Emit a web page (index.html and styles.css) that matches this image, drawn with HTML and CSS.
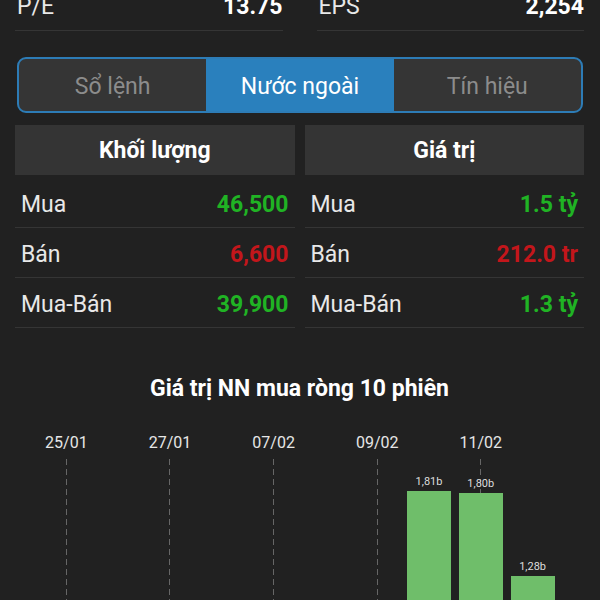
FILE: index.html
```html
<!DOCTYPE html>
<html lang="vi">
  <head>
    <meta charset="UTF-8" />
    <meta name="viewport" content="width=device-width, initial-scale=1.0" />
    <title>Nước ngoài</title>
    <link rel="stylesheet" href="styles.css">
  </head>

  <body>
    <div class="page">
      <!-- chỉ số cơ bản -->
      <div class="stats">
        <div class="stat">
          <span class="stat-label">P/E</span>
          <span class="stat-value">13.75</span>
        </div>
        <div class="stat">
          <span class="stat-label">EPS</span>
          <span class="stat-value">2,254</span>
        </div>
      </div>

      <div class="tabs">
        <span class="tab">Sổ lệnh</span>
        <span class="tab active">Nước ngoài</span>
        <span class="tab">Tín hiệu</span>
      </div>

      <div class="trade">
        <div class="trade-col">
          <div class="trade-head">Khối lượng</div>
          <div class="trade-row"><span>Mua</span><span class="up">46,500</span></div>
          <div class="trade-row"><span>Bán</span><span class="down">6,600</span></div>
          <div class="trade-row"><span>Mua-Bán</span><span class="up">39,900</span></div>
        </div>
        <div class="trade-col">
          <div class="trade-head">Giá trị</div>
          <div class="trade-row"><span>Mua</span><span class="up">1.5 tỷ</span></div>
          <div class="trade-row"><span>Bán</span><span class="down">212.0 tr</span></div>
          <div class="trade-row"><span>Mua-Bán</span><span class="up">1.3 tỷ</span></div>
        </div>
      </div>

      <div class="chart">
        <div class="chart-title">Giá trị NN mua ròng 10 phiên</div>
        <div class="plot">
          <div class="col tick">
            <div class="date">25/01</div>
            <div class="col-body"></div>
          </div>
          <div class="col">
            <div class="date"></div>
            <div class="col-body"></div>
          </div>
          <div class="col tick">
            <div class="date">27/01</div>
            <div class="col-body"></div>
          </div>
          <div class="col">
            <div class="date"></div>
            <div class="col-body"></div>
          </div>
          <div class="col tick">
            <div class="date">07/02</div>
            <div class="col-body"></div>
          </div>
          <div class="col">
            <div class="date"></div>
            <div class="col-body"></div>
          </div>
          <div class="col tick">
            <div class="date">09/02</div>
            <div class="col-body"></div>
          </div>
          <div class="col">
            <div class="date"></div>
            <div class="col-body">
              <span class="bar-value">1,81b</span>
              <div class="bar" style="height: 290px"></div>
            </div>
          </div>
          <div class="col tick">
            <div class="date">11/02</div>
            <div class="col-body">
              <span class="bar-value">1,80b</span>
              <div class="bar" style="height: 288px"></div>
            </div>
          </div>
          <div class="col">
            <div class="date"></div>
            <div class="col-body">
              <span class="bar-value">1,28b</span>
              <div class="bar" style="height: 205px"></div>
            </div>
          </div>
        </div>
      </div>
    </div>
  </body>
</html>
```

FILE: styles.css
```css
html,
body {
  margin: 0;
  padding: 0;
  height: 600px;
  overflow: hidden;
}

body {
  background-color: #212121;
  color: #e8e8e8;
  font-family: Roboto, "Noto Sans", sans-serif;
}

.page {
  padding: 0 16px 0 15px;
}

/* P/E, EPS */
.stats {
  display: grid;
  grid-template-columns: 1fr 1fr;
  column-gap: 34px;
  margin-top: -8px;
}

.stat {
  display: flex;
  justify-content: space-between;
  font-size: 23px;
  line-height: 30px;
  padding: 0 0 8px 2px;
  border-bottom: 1px solid #353535;
}

.stat-value {
  font-weight: 700;
  color: #ffffff;
}

/* tabs */
.tabs {
  display: grid;
  grid-template-columns: 1fr 1fr 1fr;
  margin: 26px 1px 0 2px;
  height: 56px;
  box-sizing: border-box;
  border: 2px solid #2d7cb6;
  border-radius: 9px;
  overflow: hidden;
  background-color: #353535;
}

.tab {
  display: flex;
  align-items: center;
  justify-content: center;
  padding-top: 2px;
  font-size: 23px;
  color: #8c8c8c;
}

.tab.active {
  background-color: #2a80bd;
  color: #ffffff;
}

/* khối lượng / giá trị */
.trade {
  display: grid;
  grid-template-columns: 1fr 1fr;
  column-gap: 10px;
  margin-top: 12px;
}

.trade-head {
  height: 50px;
  display: flex;
  align-items: center;
  justify-content: center;
  background-color: #343434;
  color: #ffffff;
  font-size: 23px;
  font-weight: 700;
  margin-bottom: 3px;
}

.trade-row {
  display: flex;
  justify-content: space-between;
  align-items: center;
  height: 46px;
  padding: 3px 6px 0;
  border-bottom: 1px solid #353535;
  font-size: 23px;
}

.trade-row .up,
.trade-row .down {
  font-weight: 700;
}

.up {
  color: #20b324;
}

.down {
  color: #c3161b;
}

/* biểu đồ */
.chart {
  margin-top: 46px;
}

.chart-title {
  text-align: center;
  font-size: 23px;
  font-weight: 700;
  line-height: 30px;
  color: #ffffff;
}

.plot {
  display: grid;
  grid-template-columns: repeat(10, 1fr);
  width: 518px;
  margin: 29px auto 0;
  height: 348px;
}

.col {
  display: flex;
  flex-direction: column;
  align-items: center;
}

.date {
  height: 20px;
  line-height: 20px;
  font-size: 16px;
  color: #e6e6e6;
  white-space: nowrap;
  margin-bottom: 6px;
}

.col-body {
  position: relative;
  flex: 1;
  width: 100%;
  display: flex;
  flex-direction: column;
  justify-content: flex-end;
  align-items: center;
}

.tick .col-body::before {
  content: "";
  position: absolute;
  left: calc(50% - 0.5px);
  top: 0;
  bottom: 0;
  width: 1px;
  background: repeating-linear-gradient(to bottom, #666666 0 6px, transparent 6px 10px);
}

.bar-value {
  position: relative;
  font-size: 11px;
  line-height: 13px;
  color: #dddddd;
  margin-bottom: 3px;
}

.bar {
  position: relative;
  width: 44px;
  background-color: #6fbe6a;
}
```
